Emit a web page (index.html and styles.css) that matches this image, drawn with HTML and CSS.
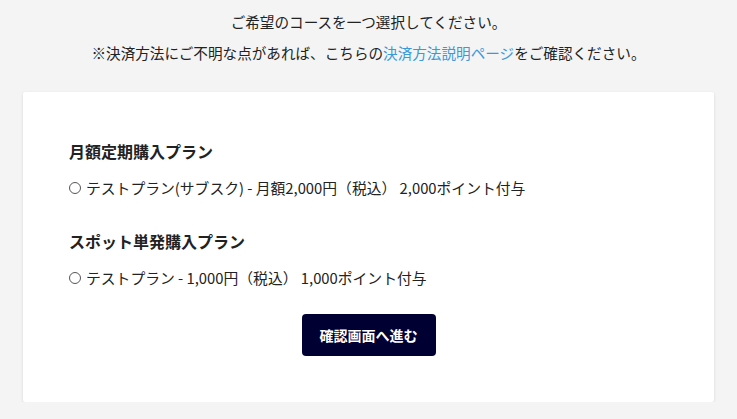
FILE: index.html
```html
<!DOCTYPE html>
<html lang="ja">
<head>
  <meta charset="UTF-8" />
  <title>コース選択</title>
  <link rel="stylesheet" href="styles.css">
</head>
<body>
  <div class="intro">
    <p>ご希望のコースを一つ選択してください。</p>
    <p>※決済方法にご不明な点があれば、こちらの<a href="#">決済方法説明ページ</a>をご確認ください。</p>
  </div>

  <div class="card">
    <h3>月額定期購入プラン</h3>
    <label class="plan"><span class="radio"></span>テストプラン(サブスク) - 月額2,000円（税込） 2,000ポイント付与</label>

    <h3>スポット単発購入プラン</h3>
    <label class="plan"><span class="radio"></span>テストプラン - 1,000円（税込） 1,000ポイント付与</label>

    <div class="actions">
      <button>確認画面へ進む</button>
    </div>
  </div>
</body>
</html>
```

FILE: styles.css
```css
body {
  margin: 0;
  background: #f4f4f4;
  font-family: "Noto Sans CJK JP", "Noto Sans", sans-serif;
  color: #222;
}
.intro {
  text-align: center;
  font-size: 14.6px;
  padding-top: 11px;
}
.intro p {
  margin: 0 0 9px;
  line-height: 22px;
}
.intro a {
  color: #3a9ad9;
  text-decoration: none;
}
.card {
  margin: 28px 23px 0;
  background: #fff;
  box-shadow: 0 1px 3px rgba(0, 0, 0, 0.12);
  border-radius: 2px;
  padding: 47px 46px 46px;
}
h3 {
  font-size: 16px;
  font-weight: bold;
  margin: 0 0 14px;
  line-height: 24px;
}
.plan {
  display: flex;
  align-items: center;
  font-size: 14.8px;
  line-height: 22px;
  margin-bottom: 30px;
}
.radio {
  width: 10px;
  height: 10px;
  border: 1px solid #555;
  border-radius: 50%;
  margin-right: 5px;
}
.actions {
  text-align: center;
  margin-top: -5px;
}
button {
  display: inline-block;
  vertical-align: top;
  background: #000033;
  color: #fff;
  border: none;
  border-radius: 4px;
  font-family: inherit;
  font-size: 14px;
  font-weight: bold;
  width: 134px;
  height: 42px;
  cursor: pointer;
}
```
